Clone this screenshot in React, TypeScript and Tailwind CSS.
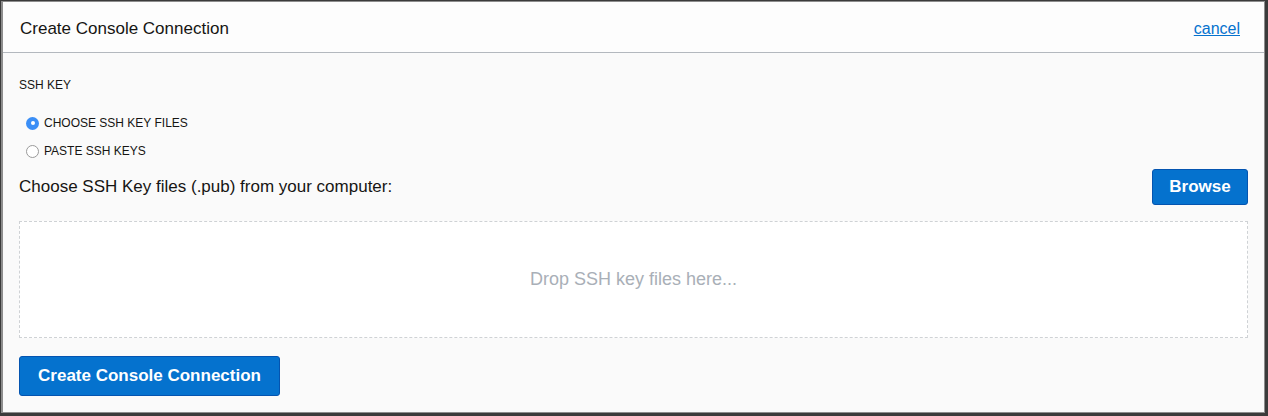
import React from 'react'

const App = () => {
  return (
    <div className="w-[1268px] h-[416px] bg-[#3b3b3b] pt-px pl-[1px] font-['Liberation_Sans',Arial,sans-serif]">
      <div className="w-[1264px] h-[412px] bg-[#fafafa] border border-[#8d8d8d] border-l-2 flex flex-col">
        {/* Header */}
        <div className="h-[51px] flex items-center justify-between pt-[3px] pl-[17px] pr-[24px] bg-[#fdfdfd] border-b border-[#b3b8be] shrink-0">
          <h2 className="text-[17px] text-[#161513]">Create Console Connection</h2>
          <a href="#" className="text-[16px] text-[#0572ce] underline">
            cancel
          </a>
        </div>

        {/* Body */}
        <div className="flex flex-col pl-[16px] pr-[16px]">
          <p className="mt-[25px] text-[12px] text-[#161513] leading-[14px]">SSH KEY</p>

          <div className="mt-[24px] flex flex-col gap-[14px] pl-[7px]">
            <label className="flex items-center gap-[5px] text-[12px] text-[#161513] leading-[14px]">
              <span className="w-[13px] h-[13px] rounded-full bg-[#3a8ef6] flex items-center justify-center">
                <span className="w-[4px] h-[4px] rounded-full bg-white" />
              </span>
              CHOOSE SSH KEY FILES
            </label>
            <label className="flex items-center gap-[5px] text-[12px] text-[#161513] leading-[14px]">
              <span className="w-[13px] h-[13px] rounded-full bg-white border border-[#9a9a9a]" />
              PASTE SSH KEYS
            </label>
          </div>

          <div className="mt-[11px] flex items-center justify-between">
            <p className="text-[17px] text-[#161513]">Choose SSH Key files (.pub) from your computer:</p>
            <button className="w-[96px] h-[36px] rounded-[3px] bg-[#0572ce] border border-[#0454b0] text-white text-[17px] font-bold">
              Browse
            </button>
          </div>

          <div className="mt-[16px] h-[117px] bg-white border border-dashed border-[#cfd2d5] flex items-center justify-center">
            <span className="text-[18px] text-[#a9afb7]">Drop SSH key files here...</span>
          </div>

          <div className="mt-[18px]">
            <button className="w-[261px] h-[40px] rounded-[3px] bg-[#0572ce] border border-[#0454b0] text-white text-[17px] font-bold">
              Create Console Connection
            </button>
          </div>
        </div>
      </div>
    </div>
  )
}

export default App
